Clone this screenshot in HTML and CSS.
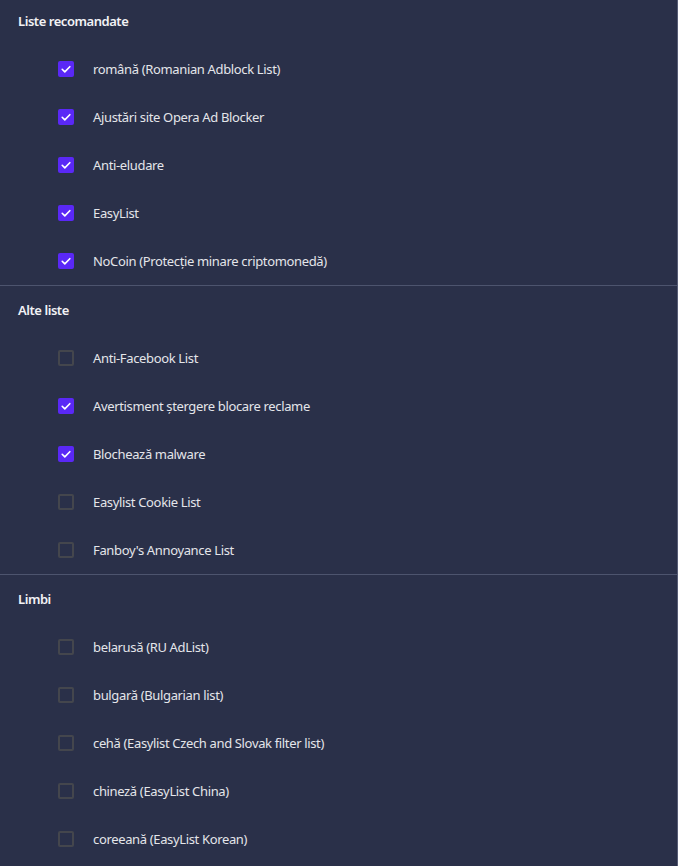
FILE: index.html
```html
<!DOCTYPE html>
<html lang="ro">
<head>
<meta charset="utf-8">
<link rel="stylesheet" href="styles.css">
</head>
<body>
<div class="page">
  <section class="section">
    <h2 class="heading">Liste recomandate</h2>
    <ul class="list">
      <li class="row"><span class="box checked"><svg viewBox="0 0 16 16"><path d="M4.2 8.3l2.6 2.6 5-5.2"/></svg></span><span class="label">română (Romanian Adblock List)</span></li>
      <li class="row"><span class="box checked"><svg viewBox="0 0 16 16"><path d="M4.2 8.3l2.6 2.6 5-5.2"/></svg></span><span class="label">Ajustări site Opera Ad Blocker</span></li>
      <li class="row"><span class="box checked"><svg viewBox="0 0 16 16"><path d="M4.2 8.3l2.6 2.6 5-5.2"/></svg></span><span class="label">Anti-eludare</span></li>
      <li class="row"><span class="box checked"><svg viewBox="0 0 16 16"><path d="M4.2 8.3l2.6 2.6 5-5.2"/></svg></span><span class="label">EasyList</span></li>
      <li class="row"><span class="box checked"><svg viewBox="0 0 16 16"><path d="M4.2 8.3l2.6 2.6 5-5.2"/></svg></span><span class="label">NoCoin (Protecție minare criptomonedă)</span></li>
    </ul>
  </section>
  <section class="section">
    <h2 class="heading">Alte liste</h2>
    <ul class="list">
      <li class="row"><span class="box"></span><span class="label">Anti-Facebook List</span></li>
      <li class="row"><span class="box checked"><svg viewBox="0 0 16 16"><path d="M4.2 8.3l2.6 2.6 5-5.2"/></svg></span><span class="label">Avertisment ștergere blocare reclame</span></li>
      <li class="row"><span class="box checked"><svg viewBox="0 0 16 16"><path d="M4.2 8.3l2.6 2.6 5-5.2"/></svg></span><span class="label">Blochează malware</span></li>
      <li class="row"><span class="box"></span><span class="label">Easylist Cookie List</span></li>
      <li class="row"><span class="box"></span><span class="label">Fanboy's Annoyance List</span></li>
    </ul>
  </section>
  <section class="section">
    <h2 class="heading">Limbi</h2>
    <ul class="list">
      <li class="row"><span class="box"></span><span class="label">belarusă (RU AdList)</span></li>
      <li class="row"><span class="box"></span><span class="label">bulgară (Bulgarian list)</span></li>
      <li class="row"><span class="box"></span><span class="label">cehă (Easylist Czech and Slovak filter list)</span></li>
      <li class="row"><span class="box"></span><span class="label">chineză (EasyList China)</span></li>
      <li class="row"><span class="box"></span><span class="label">coreeană (EasyList Korean)</span></li>
    </ul>
  </section>
</div>
</body>
</html>
```
FILE: styles.css
```css
html, body {
  margin: 0;
  padding: 0;
  background: #2a3049;
  height: 100%;
  overflow: hidden;
}
body {
  font-family: "Noto Sans", "Open Sans", sans-serif;
  font-size: 13px;
  color: #e4e5ea;
}
.page {
  margin-top: -3px;
  border-right: 1px solid #565c75;
  min-height: 900px;
}
.section + .section {
  border-top: 1px solid #4d546e;
}
.heading {
  margin: 0;
  padding: 14px 18px;
  font-size: 13px;
  font-weight: 600;
  letter-spacing: -0.45px;
  line-height: 20px;
  color: #f2f2f5;
}
.list {
  list-style: none;
  margin: 0;
  padding: 0;
}
.row {
  display: flex;
  align-items: center;
  height: 48px;
  padding-left: 58px;
  gap: 19px;
}
.box {
  width: 16px;
  height: 16px;
  box-sizing: border-box;
  border: 2px solid #44464d;
  border-radius: 2px;
  flex: none;
  display: flex;
}
.box.checked {
  background: #5a28f6;
  border: none;
}
.box svg {
  width: 16px;
  height: 16px;
  fill: none;
  stroke: #ffffff;
  stroke-width: 1.6;
  stroke-linecap: round;
  stroke-linejoin: round;
}
.label {
  line-height: 20px;
  letter-spacing: -0.35px;
}
```
